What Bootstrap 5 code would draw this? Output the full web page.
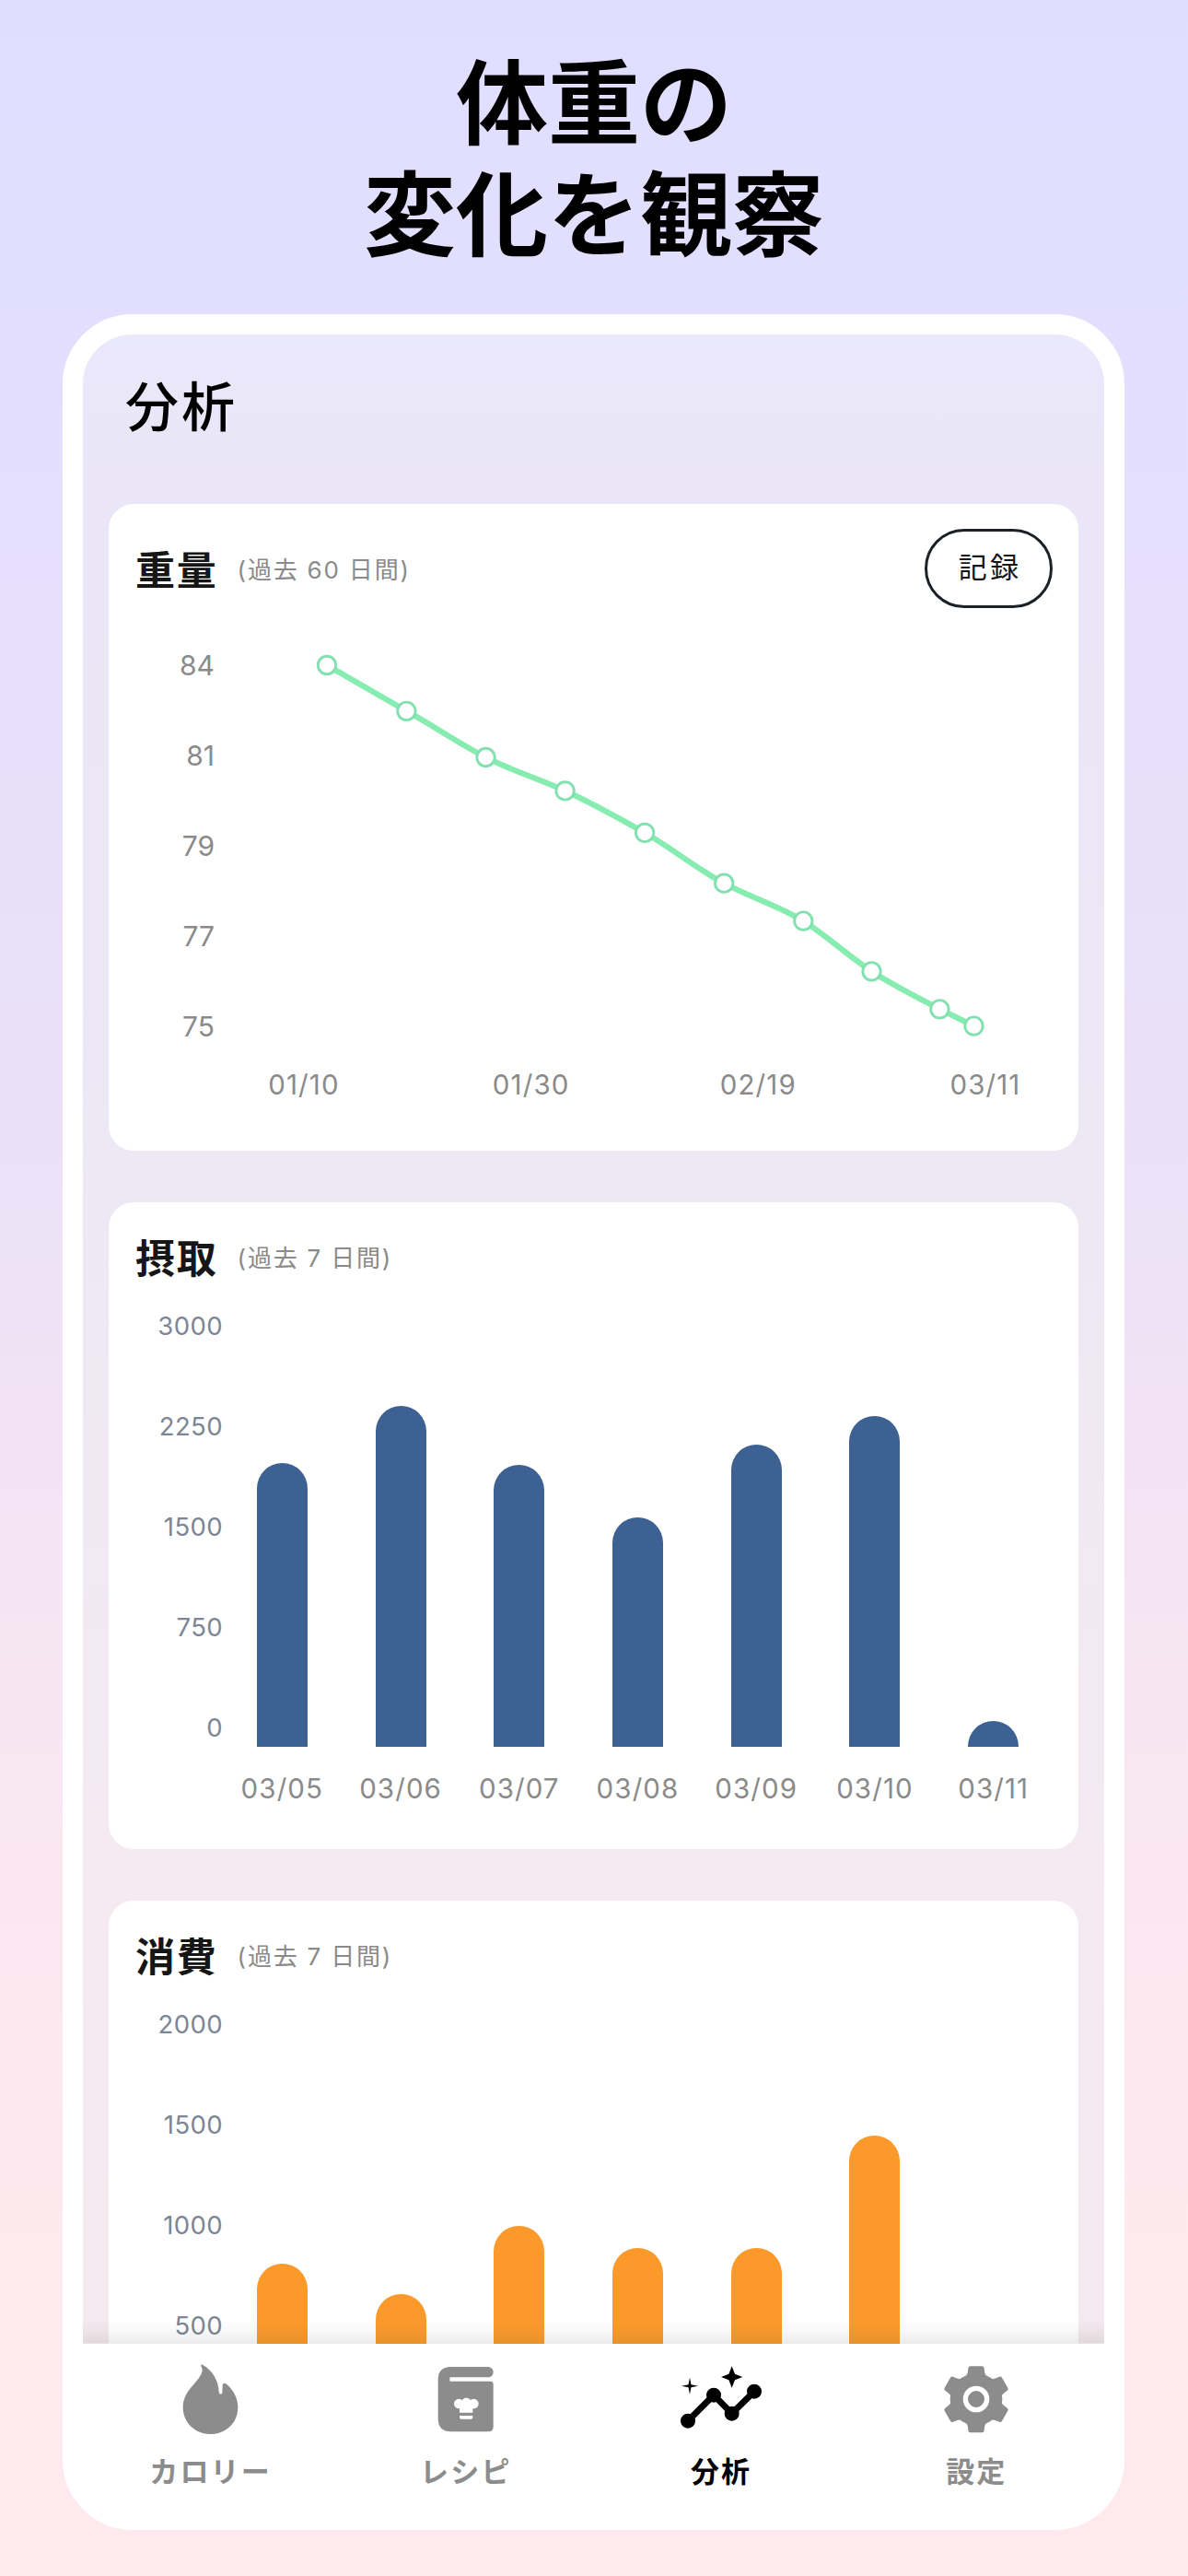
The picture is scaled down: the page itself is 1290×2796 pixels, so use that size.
<!DOCTYPE html>
<html lang="ja">
<head>
<meta charset="utf-8">
<meta name="viewport" content="width=device-width, initial-scale=1">
<title>体重の変化を観察</title>
<link href="https://cdn.jsdelivr.net/npm/bootstrap@5.3.0/dist/css/bootstrap.min.css" rel="stylesheet">
<style>
  body {
    height: 2796px;
    background: linear-gradient(180deg, #e0deff 0%, #e5dffd 22%, #eae1f8 42%, #f3e3f4 58%, #fae7f0 72%, #fee9ee 88%, #feeaee 100%);
    font-family: Inter, "Noto Sans CJK JP", sans-serif;
  }
  .headline { height: 341px; padding-top: 45px; font: 700 100px/121px "Noto Sans CJK JP", sans-serif; color: #000; }
  .phone {
    width: 1153px; height: 2405px; margin-left: 68px;
    border: 22px solid #fff; border-radius: 76px;
    background: linear-gradient(180deg, #eae8fb 0, #eae6f8 150px, #ece8f4 900px, #f5eaf2 1680px, #f4e9ee 2180px, #fff 2181px);
  }
  .screen-body { height: 2181px; }
  .screen-title { height: 184px; padding: 42px 0 0 46px; font-size: 58px; line-height: 74px; letter-spacing: 3px; color: #000; font-weight: 500; }
  .panel { width: 1053px; height: 702px; margin: 0 0 56px 28px; border-radius: 27px; background: #fff; }
  .panel-head { padding-left: 29px; padding-right: 28px; gap: 21px; }
  .head-line { height: 126px; padding-top: 27px; padding-bottom: 13px; }
  .head-line .panel-title, .head-line .panel-note { padding-top: 4px; }
  .head-bars { height: 79px; padding-top: 41px; }
  .panel-title { font-size: 43px; line-height: 40px; letter-spacing: 1.8px; font-weight: 700; color: #161616; }
  .panel-note { font-size: 26px; line-height: 40px; letter-spacing: 1.8px; color: #8a8a8a; }
  .record-btn {
    width: 139px; height: 86px; border: 3px solid #1b2127; border-radius: 43px;
    font-size: 31px; letter-spacing: 3.2px; color: #161616; padding: 0 0 1px 3px;
  }
  .axis-y { width: 124px; font-size: 27.5px; letter-spacing: .4px; color: #7c8695; }
  .axis-y span { height: 109px; line-height: 111px; }
  .axis-y.weight { width: 115px; margin-right: 10px; font-size: 30px; letter-spacing: 0; color: #8a8a8a; }
  .axis-y.weight span { height: 98px; line-height: 98px; }
  .axis-x { color: #8a8a8a; font-size: 29.5px; letter-spacing: 1.1px; text-align: center; white-space: nowrap; }
  .axis-x.weight { width: 830px; margin-left: 42px; line-height: 28px; }
  .axis-x.weight span { width: 90px; }
  .axis-x.days { line-height: 90px; }
  .plot { width: 901px; }
  .bars { height: 512px; }
  .bars i { display: block; width: 55px; border-radius: 27.5px 27.5px 0 0; }
  .intake i { background: #3d6192; }
  .burned i { background: #fb9a2b; }
  .tabbar { height: 180px; background: #fff; position: relative; border-radius: 0 0 54px 54px; }
  .tabbar::before {
    content: ""; position: absolute; left: 0; right: 0; top: -26px; height: 26px;
    background: linear-gradient(180deg, rgba(60,60,60,0), rgba(60,60,60,.035) 45%, rgba(60,60,60,.1));
  }
  .tab-item { color: #8c8c8c; padding-top: 19px; font-size: 31px; line-height: 40px; font-weight: 700; letter-spacing: 2.2px; }
  .tab-item.current { color: #000; }
  .tab-item svg { width: 90px; height: 80px; margin-bottom: 20px; fill: currentColor; }
</style>
</head>
<body class="overflow-hidden">
<h1 class="headline text-center m-0">体重の<br>変化を観察</h1>

<main class="phone overflow-hidden">
  <div class="screen-body overflow-hidden">
    <h2 class="screen-title m-0">分析</h2>

    <section class="panel overflow-hidden">
      <div class="panel-head head-line d-flex align-items-center">
        <span class="panel-title">重量</span>
        <span class="panel-note">(過去 60 日間)</span>
        <button class="record-btn btn ms-auto">記録</button>
      </div>
      <div class="d-flex">
        <div class="axis-y weight d-flex flex-column text-end">
          <span>84</span><span>81</span><span>79</span><span>77</span><span>75</span>
        </div>
        <div class="plot">
          <svg class="d-block" width="901" height="490" viewBox="243 672.6 901 490">
            <path d="M355 721.6 441.4 771.4C470 787 499 807 527.5 821.6S585 845 613.6 858 671 887 700.1 903.5 757 943 786.2 958.3 848 984 872.3 999.2 922 1038 946.5 1053.9 1002 1085 1020.4 1094.9L1057.5 1113.2" fill="none" stroke="#86ecb0" stroke-width="6.200" stroke-linejoin="round"/>
            <g fill="#fff" stroke="#83e0b0" stroke-width="2.900">
              <circle cx="355" cy="721.6" r="9.7"/><circle cx="441.4" cy="771.4" r="9.7"/>
              <circle cx="527.5" cy="821.6" r="9.7"/><circle cx="613.6" cy="858" r="9.7"/>
              <circle cx="700.1" cy="903.5" r="9.7"/><circle cx="786.2" cy="958.3" r="9.7"/>
              <circle cx="872.3" cy="999.2" r="9.7"/><circle cx="946.5" cy="1053.9" r="9.7"/>
              <circle cx="1020.4" cy="1094.9" r="9.7"/><circle cx="1057.5" cy="1113.2" r="9.7"/>
            </g>
          </svg>
          <div class="axis-x weight d-flex justify-content-between">
            <span>01/10</span><span>01/30</span><span>02/19</span><span>03/11</span>
          </div>
        </div>
      </div>
    </section>

    <section class="panel overflow-hidden">
      <div class="panel-head head-bars d-flex">
        <span class="panel-title">摂取</span>
        <span class="panel-note">(過去 7 日間)</span>
      </div>
      <div class="d-flex">
        <div class="axis-y d-flex flex-column text-end">
          <span>3000</span><span>2250</span><span>1500</span><span>750</span><span>0</span>
        </div>
        <div class="plot">
          <div class="bars intake d-flex align-items-end justify-content-around">
            <i style="height:308px"></i><i style="height:370px"></i><i style="height:306px"></i><i style="height:249px"></i><i style="height:328px"></i><i style="height:359px"></i><i style="height:28px"></i>
          </div>
          <div class="axis-x days d-flex">
            <span class="col">03/05</span><span class="col">03/06</span><span class="col">03/07</span><span class="col">03/08</span><span class="col">03/09</span><span class="col">03/10</span><span class="col">03/11</span>
          </div>
        </div>
      </div>
    </section>

    <section class="panel overflow-hidden">
      <div class="panel-head head-bars d-flex">
        <span class="panel-title">消費</span>
        <span class="panel-note">(過去 7 日間)</span>
      </div>
      <div class="d-flex">
        <div class="axis-y d-flex flex-column text-end">
          <span>2000</span><span>1500</span><span>1000</span><span>500</span>
        </div>
        <div class="plot">
          <div class="bars burned d-flex align-items-end justify-content-around">
            <i style="height:197px"></i><i style="height:164px"></i><i style="height:238px"></i><i style="height:214px"></i><i style="height:214px"></i><i style="height:336px"></i><i style="height:0"></i>
          </div>
        </div>
      </div>
    </section>
  </div>

  <nav class="tabbar d-flex">
    <div class="tab-item col d-flex flex-column align-items-center">
      <svg viewBox="11 40 270 240"><path d="M119 51C151 68 172 105 172 140q1 7 6 7 5 0 5-6l1-24q2-9 11-4c25 20 39 47 39 77 0 50-39 87-89 87S55 240 55 190C55 130 116 105 118 68q0-5-3-10-4-9 4-7z"/></svg>
      <span>カロリー</span>
    </div>
    <div class="tab-item col d-flex flex-column align-items-center">
      <svg viewBox="843 40 270 240"><path d="M929 58h121a17 17 0 0 1 0 34H928q-3 0-3 3v7q0 3 3 3h130q9 0 9 9v139q0 16-16 16H930q-43 0-43-43V100q0-42 42-42z"/><g fill="#fff"><circle cx="955" cy="178" r="16"/><circle cx="979" cy="174" r="15.500"/><circle cx="1003" cy="178" r="16"/><path d="M957 180h43v27h-43zM957 217h43v5q0 6-6 6h-31q-6 0-6-6z"/></g></svg>
      <span>レシピ</span>
    </div>
    <div class="tab-item current col d-flex flex-column align-items-center">
      <svg viewBox="39 40 270 240"><path d="M66 234 150 150 209 210 282 138" fill="none" stroke="currentColor" stroke-width="21"/><circle cx="66" cy="234" r="24"/><circle cx="150" cy="150" r="24"/><circle cx="209" cy="210" r="24"/><circle cx="282" cy="138" r="24"/><path d="M209 56 219 81 244 91 219 101 209 126 199 101 174 91 199 81zM72 93 76.500 115.500 99 120 76.500 124.500 72 147 67.500 124.500 45 120 67.500 115.500z"/></svg>
      <span>分析</span>
    </div>
    <div class="tab-item col d-flex flex-column align-items-center">
      <svg viewBox="871 40 270 240">
        <defs><path id="tooth" d="M971 90q8-6 9-28 1-6 7-6h38q6 0 7 6 1 22 9 28l-10 30h-50z"/></defs>
        <circle cx="1006" cy="164" r="85"/>
        <use href="#tooth"/><use href="#tooth" transform="rotate(60 1006 164)"/><use href="#tooth" transform="rotate(120 1006 164)"/><use href="#tooth" transform="rotate(180 1006 164)"/><use href="#tooth" transform="rotate(240 1006 164)"/><use href="#tooth" transform="rotate(300 1006 164)"/>
        <circle cx="1006" cy="163" r="35" fill="none" stroke="#fff" stroke-width="16"/>
      </svg>
      <span>設定</span>
    </div>
  </nav>
</main>
<script src="https://cdn.jsdelivr.net/npm/bootstrap@5.3.0/dist/js/bootstrap.bundle.min.js"></script>
</body>
</html>
